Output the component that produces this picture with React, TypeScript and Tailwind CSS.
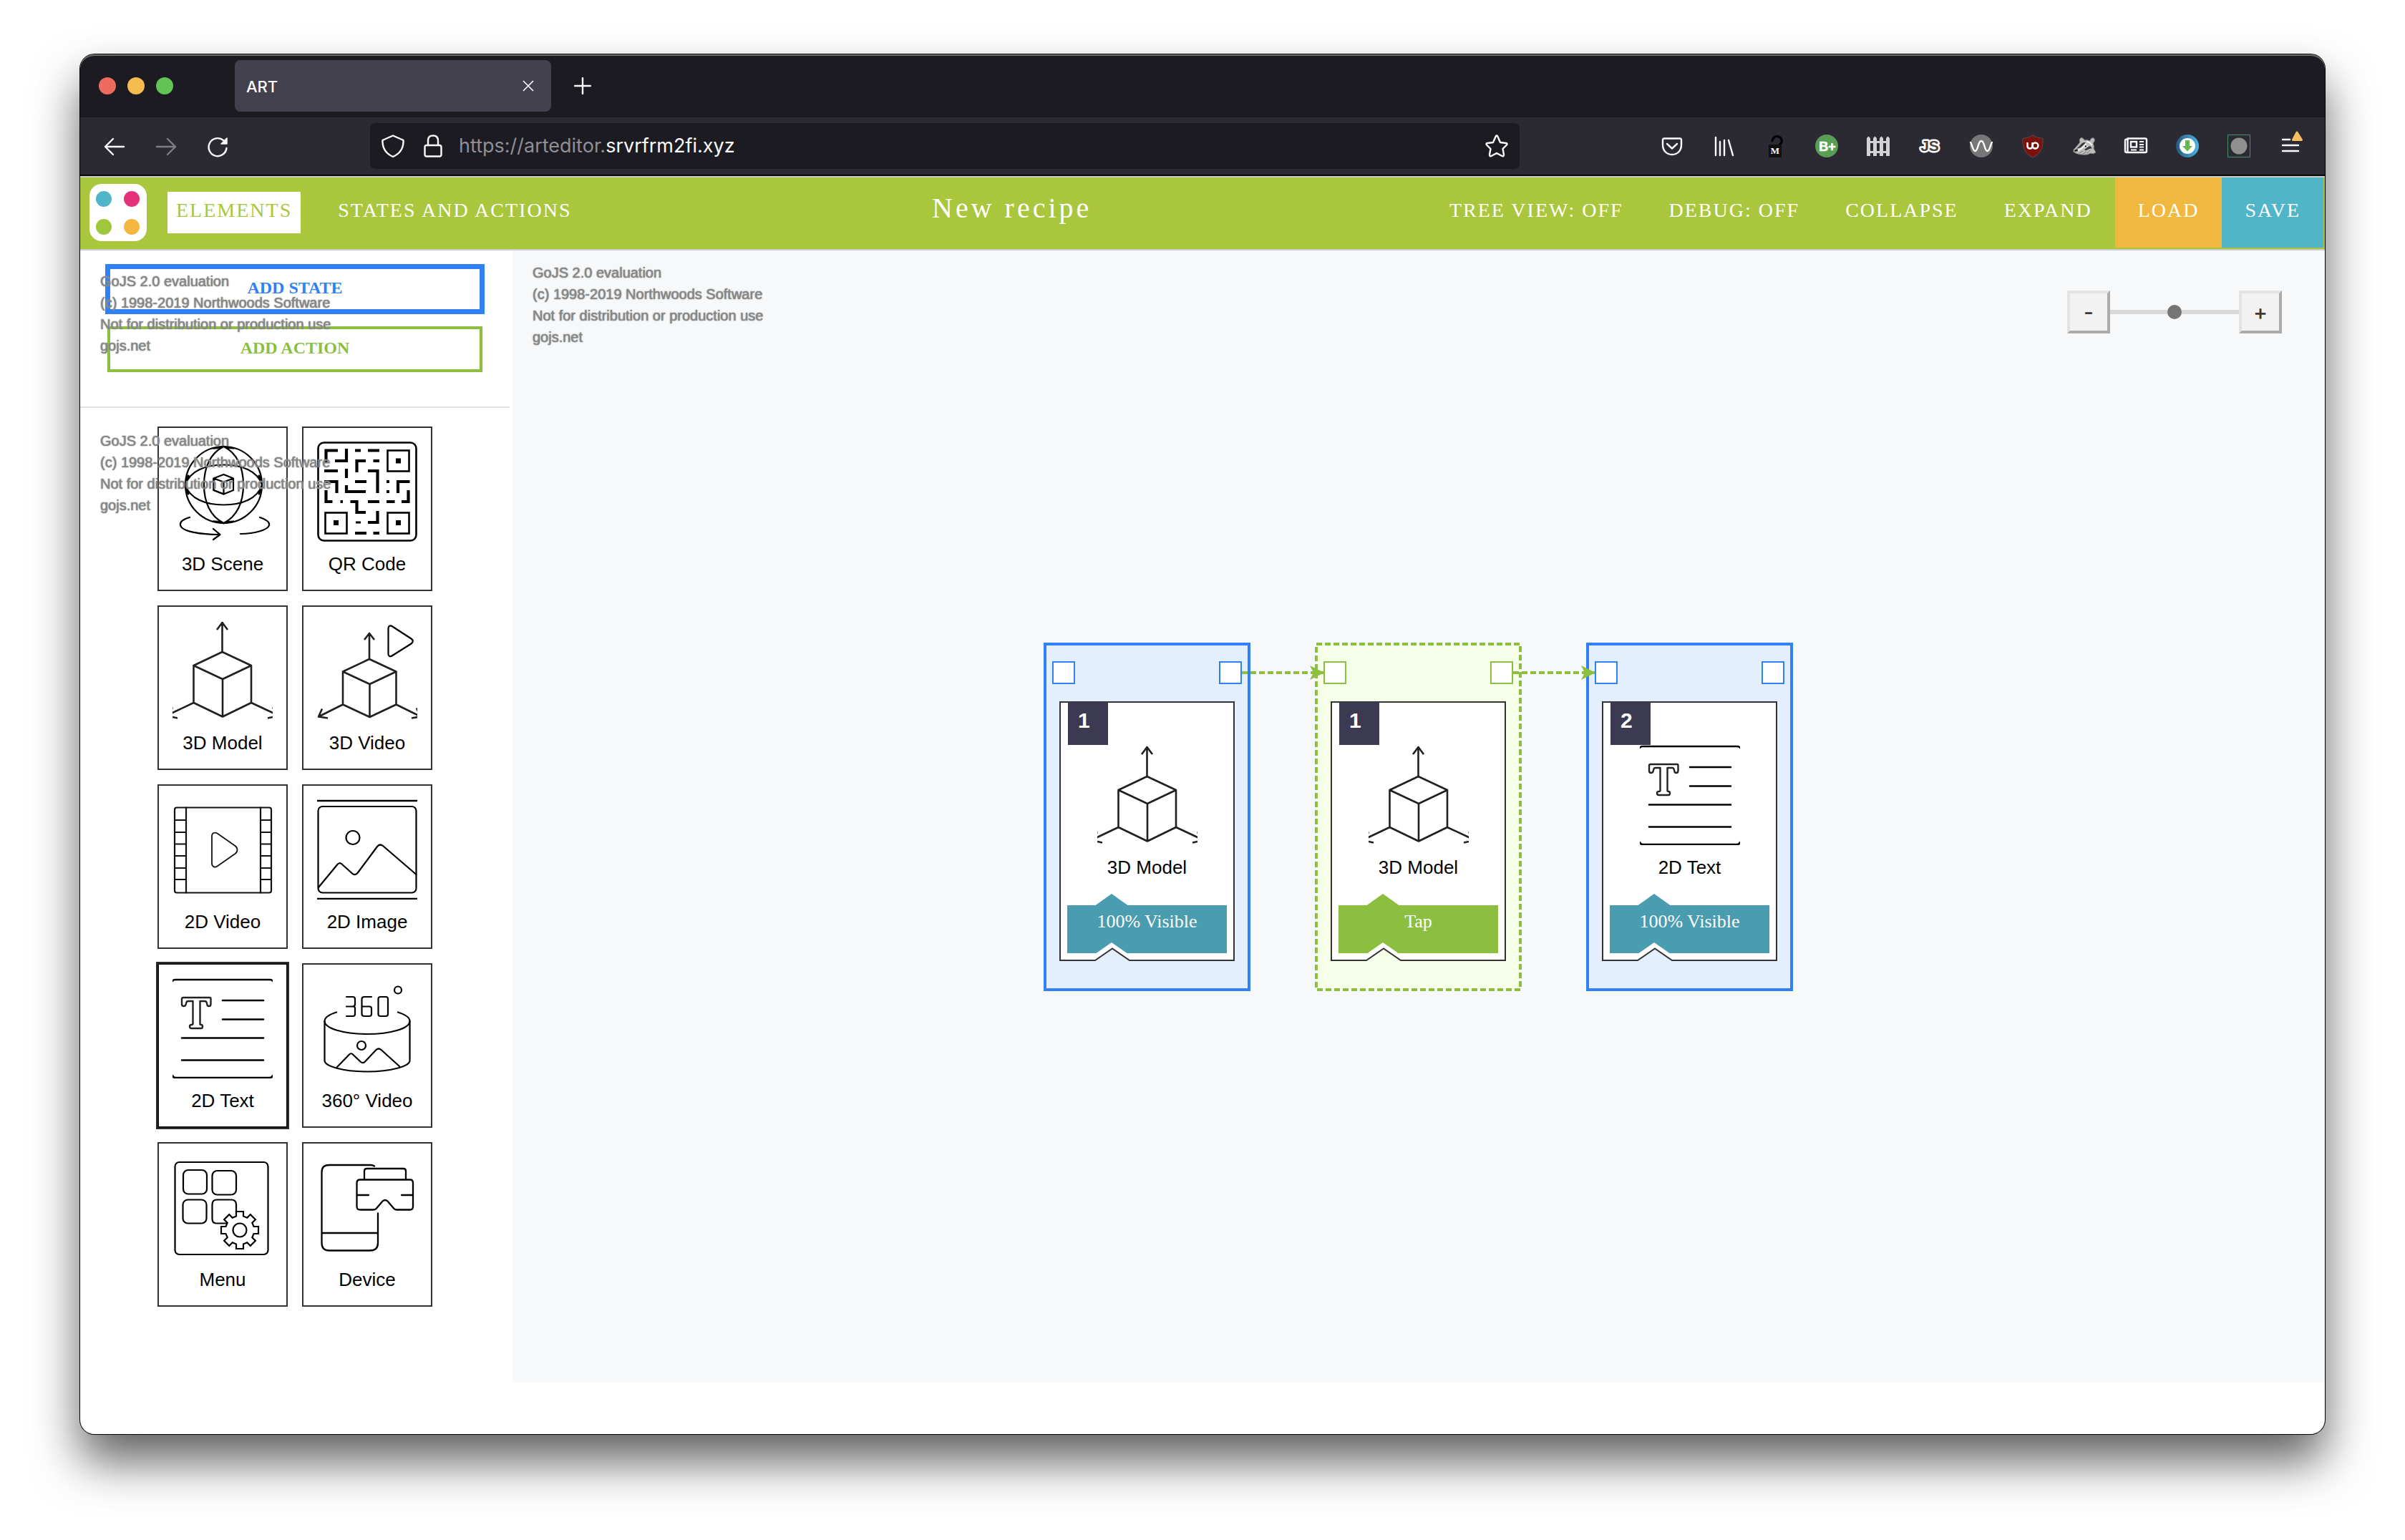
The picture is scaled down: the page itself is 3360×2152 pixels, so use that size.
import React from "react";

type DrawingProps = { children: React.ReactNode; color?: string };

function Drawing({ children, color = "#000" }: DrawingProps) {
  return (
    <svg
      viewBox="0 0 140 140"
      className="block size-35 shrink-0"
      fill="none"
      stroke={color}
      strokeWidth="2.6"
      strokeLinecap="round"
      strokeLinejoin="round"
      aria-hidden="true"
    >
      {children}
    </svg>
  );
}

function Scene3D() {
  return (
    <Drawing>
      <g strokeWidth="2.2">
        <circle cx="71.500" cy="60.500" r="53.500" />
        <path d="M71.500 7C90 16 99 36 99 60.500S90 105 71.500 114C53 105 44 85 44 60.500S53 16 71.500 7Z" />
        <path d="M18 60.500C24 41 46 32.500 71.500 32.500S119 41 125 60.500C119 80 97 88.500 71.500 88.500S24 80 18 60.500Z" />
        <path d="M57.500 51.500 71.500 46 85 51.500 71.500 56.500ZV68L71.500 73.500 85 68V51.500M71.500 56.500V73.500" />
        <path d="M57.500 51.500V68L71.500 73.500" />
        <path d="M24 106C14 109 10 113 11 117C13 126 40 130 66 130M57 122 66.500 130 57 137" />
        <path d="M122 106C131 109 136 113 135 117C133 124 114 128.500 95 129" />
      </g>
      <path
        d="M57 10 71.500 6 86 10 76 9.500 71.500 7 67 9.500ZM57 111 71.500 115 86 111 76 111.500 71.500 114 67 111.500Z"
        fill="#000"
        strokeWidth="1"
      />
      <path d="M22 48 19 56M121 48 124 56M22 73 19 65M121 73 124 65" strokeWidth="3" />
    </Drawing>
  );
}

function QrCode() {
  return (
    <Drawing>
      <rect x="1.500" y="1.500" width="137" height="137" rx="8" />
      <g strokeWidth="2.600" strokeLinejoin="miter">
        <rect x="98.500" y="12.500" width="30" height="29" />
        <rect x="11.500" y="99.500" width="30" height="29" />
        <rect x="98.500" y="99.500" width="30" height="29" />
      </g>
      <g fill="#000" stroke="none">
        <rect x="110" y="23.500" width="7" height="7" />
        <rect x="23" y="110" width="7" height="7" />
        <rect x="110" y="110" width="7" height="7" />
      </g>
      <path
        strokeLinecap="butt"
        strokeLinejoin="miter"
        strokeWidth="4.2"
        d="M29 12.500H12.500V30M41 10V27H25M53 12.500H61M71 12.500H87M68 27H55.500V43M78.500 27H87M10 41H29M41 38V51M71 41H84.500V72M10 56H27.500V72M53 56H69M97 56H101M97 70H101M129.500 56H113V72M41 61V70H68M12.500 68V84H21.500M46.500 84H55.500V99H68M71 84H87M97 84H108.500M118 84H127.500V68M84.500 97V113H71M53 128H69M78.500 128H87M32.500 84H36"
      />
      <path d="M54 113H61" strokeWidth="3" strokeLinecap="butt" />
    </Drawing>
  );
}

function Model3D() {
  return (
    <Drawing color="#231f20">
      <g strokeLinecap="butt">
        <path d="M69.500 2V44M62 13 69.500 3 77 13M69.500 44 29.500 63 70 82 110 63ZM29.500 63V115L70 134.500 110 115V63M70 82V134.500M29.500 115-1 129.500M110 115 141 129.500" />
        <path d="M0 135 7 136.500M133 136.500 140 135" />
        <path d="M0 121V124M140 121V124" strokeWidth="1" />
      </g>
    </Drawing>
  );
}

function Video3D() {
  return (
    <Drawing color="#231f20">
      <g strokeLinecap="butt">
        <path d="M73 18V54M66 27 73 18 80 27M73 54 36 71.500 73.500 89 110.500 71.500ZM36 71.500V117.500L73.500 135 110.500 117.500V71.500M73.500 89V135M36 117.500 2 134.500M110.500 117.500 141 132.500M7 123.500 2 134.500 15 136.500M132 136.500 141 135M139 122.500 141 127" />
      </g>
      <path
        stroke="#000"
        strokeWidth="2.2"
        d="M99.500 11C99.500 8 102 6.500 104.500 8L131.500 25.500C134.500 27.500 134.500 30.500 131.500 32.500L104.500 49.500C102 51 99.500 50 99.500 47Z"
      />
    </Drawing>
  );
}

function Video2D() {
  return (
    <Drawing color="#111">
      <g strokeWidth="2.2">
        <rect x="3" y="11.500" width="135" height="119" rx="3" />
        <path d="M19 11.500V130.500M123 11.500V130.500" />
        <path d="M3 29H19M3 46H19M3 62.500H19M3 79H19M3 96H19M3 112H19M123 29H138M123 46H138M123 62.500H138M123 79H138M123 96H138M123 112H138" />
        <path
          strokeWidth="1.800"
          d="M55 51.500C55 47 59 45.500 62.500 47.500L87.500 65C91.500 68 91.500 73 87.500 76L62.500 93.500C59 96 55 94 55 89.500Z"
        />
      </g>
    </Drawing>
  );
}

function Image2D() {
  return (
    <Drawing>
      <path d="M0 2H140M0 139H140" strokeLinecap="butt" />
      <rect x="1.500" y="10" width="137" height="120.500" rx="6" strokeWidth="2.2" />
      <circle cx="50" cy="53.500" r="9.500" strokeWidth="2.2" />
      <path
        strokeWidth="2.2"
        d="M2 123 28 91.500Q31 87.500 34.500 90.500L49 103.500Q53 107 56.500 103L84 66Q87.500 61.500 92 65L138.500 105"
      />
    </Drawing>
  );
}

function Text2D() {
  return (
    <Drawing>
      <path d="M0 4Q1 2 4 2H136Q139 2 140 4M0 136Q1 139 4 139H136Q139 139 140 136" />
      <path d="M70 31H127M70 57.500H127M13 83.500H127M13 114.500H127" />
      <path
        stroke="#222"
        strokeWidth="2.4"
        d="M15 27H52Q53.500 27 53.500 29V36Q53.500 39 51 39Q48.500 39 48.500 37L47.500 33.500Q47 32 45 32H38.500V63.500Q38.500 65 40 65Q42 65 42 67.500Q42 70 40 70H26.500Q24 70 24 67.500Q24 65 26.500 65Q28.500 65 28.500 63.500V32H22Q20 32 19.500 33.500L18.500 37Q18 39 15.500 39Q13 39 13 36V29Q13 27 15 27Z"
      />
    </Drawing>
  );
}

function Video360() {
  return (
    <Drawing>
      <g strokeWidth="2.2">
        <path d="M41 26H50Q53 26 53 29V36Q53 39.500 50 39.500H41M50 39.500Q53 39.500 53 42V50Q53 53 50 53H41" />
        <path d="M76 26H66Q62.500 26 62.500 29V50Q62.500 53 66 53H73Q76 53 76 50V42.500Q76 39.500 73 39.500H63" />
        <rect x="85.500" y="26" width="13.500" height="27" rx="3" />
        <circle cx="113" cy="16.500" r="5" />
        <path d="M27 47.500C16 51 10.500 55 10.500 60C10.500 70 37 78 70 78S129.500 70 129.500 60C129.500 55 124 51 113 47.500" />
        <path d="M10.500 60V115C10.500 123 37 130.500 70 130.500S129.500 123 129.500 115V60" />
        <circle cx="62" cy="94" r="6" />
        <path d="M28 124 44.500 107Q47.500 103.500 50.500 107L61 117Q64 119.500 67 116.500L82.500 100Q86 97 89.500 100L115 123" />
      </g>
    </Drawing>
  );
}

const gearOutline = Array.from({ length: 8 }, (_, tooth) => {
  const angle = (tooth * Math.PI) / 4;
  return [
    [-5, -19.5],
    [-5, -26],
    [5, -26],
    [5, -19.5],
  ]
    .map(([x, y]) => {
      const px = 94 + x * Math.cos(angle) - y * Math.sin(angle);
      const py = 102 + x * Math.sin(angle) + y * Math.cos(angle);
      return `${px.toFixed(1)},${py.toFixed(1)}`;
    })
    .join(" ");
}).join(" ");

function MenuDrawing() {
  return (
    <Drawing>
      <g strokeWidth="2.2">
        <rect x="3.500" y="7" width="130" height="129" rx="6" />
        <rect x="15" y="18" width="33" height="33.500" rx="7" />
        <rect x="55.500" y="19" width="33.500" height="33.500" rx="7" />
        <rect x="14.500" y="59.500" width="33" height="33" rx="7" />
        <path d="M76 92.500H61Q55.500 92.500 55.500 86V66.500Q55.500 59.500 62 59.500H82Q89 59.500 89 66.500V80" />
        <polygon points={gearOutline} fill="#fff" strokeLinejoin="miter" />
        <circle cx="94" cy="102" r="9.500" />
      </g>
    </Drawing>
  );
}

function DeviceDrawing() {
  return (
    <Drawing>
      <g strokeWidth="2.300">
        <path d="M80 12.500Q78 11 75 11H17Q6.500 11 6.500 21V120Q6.500 130.500 17 130.500H74Q85 130.500 85 120V78.500M7 106H84" />
        <path d="M66 31V19.500Q66 16 69.500 16H120.500Q124 16 124 19.500V31" />
        <path d="M60 31.500H130Q134 31.500 134 36V69Q134 73.500 130 73.500H111Q108.500 73.500 107 71.500L98.500 61.500Q95 58.500 91.500 61.500L83 71.500Q81.500 73.500 79 73.500H60Q55.500 73.500 55.500 69V36Q55.500 31.500 60 31.500Z" />
        <path d="M56 53H72M118 53H134" />
      </g>
    </Drawing>
  );
}

const palette = [
  { label: "3D Scene", icon: <Scene3D /> },
  { label: "QR Code", icon: <QrCode /> },
  { label: "3D Model", icon: <Model3D /> },
  { label: "3D Video", icon: <Video3D /> },
  { label: "2D Video", icon: <Video2D /> },
  { label: "2D Image", icon: <Image2D /> },
  { label: "2D Text", icon: <Text2D />, selected: true },
  { label: "360° Video", icon: <Video360 /> },
  { label: "Menu", icon: <MenuDrawing /> },
  { label: "Device", icon: <DeviceDrawing /> },
];

function Watermark() {
  return (
    <p className="pointer-events-none whitespace-nowrap font-['Liberation_Sans',sans-serif] text-[20px] leading-[30px] text-[#868686] [text-shadow:0_0_1px_#868686,0_0_2px_#9a9a9a]">
      GoJS 2.0 evaluation
      <br />
      (c) 1998-2019 Northwoods Software
      <br />
      Not for distribution or production use
      <br />
      gojs.net
    </p>
  );
}

function ToolIcon({ children }: { children: React.ReactNode }) {
  return (
    <svg viewBox="0 0 32 32" className="block size-8 overflow-visible" fill="none" stroke="#fbfbfe" strokeWidth="2.4" strokeLinecap="round" strokeLinejoin="round" aria-hidden="true">
      {children}
    </svg>
  );
}

const extensions: { name: string; icon: React.ReactNode }[] = [
  {
    name: "Save to Pocket",
    icon: (
      <>
        <path d="M5 5.500H27Q29 5.500 29 8V14.500C29 22.500 23.500 28 16 28S3 22.500 3 14.500V8Q3 5.500 5 5.500Z" />
        <path d="M9 13 16 19.500 23 13" />
      </>
    ),
  },
  { name: "Library", icon: <path d="M5 4V29M11 10V29M17 8V29M23 8 29 29" /> },
  {
    name: "Mailvelope",
    icon: (
      <>
        <path d="M12 9C13 3.500 17 1.500 21 3C26 5 27 11 22 14" stroke="#000" strokeWidth="3" />
        <rect x="7" y="14" width="18" height="18" fill="#111" stroke="none" />
        <text x="16" y="27" textAnchor="middle" className="font-['Liberation_Serif',serif] text-[13px] font-bold" fill="#fff" stroke="none">M</text>
      </>
    ),
  },
  {
    name: "B+",
    icon: (
      <>
        <circle cx="16" cy="16" r="16" fill="#589f53" stroke="none" />
        <text x="17" y="23" textAnchor="middle" className="font-['Liberation_Sans',sans-serif] text-[18px] font-bold" fill="#fff" stroke="#fff" strokeWidth=".6">B+</text>
      </>
    ),
  },
  {
    name: "Fence",
    icon: (
      <path
        d="M0 5 2.500 2.500 5 5V30H0ZM9 5 11.500 2.500 14 5V30H9ZM18 5 20.500 2.500 23 5V30H18ZM27 5 29.500 2.500 32 5V30H27ZM0 9H32V12H0ZM0 23H32V26H0Z"
        fill="#d2d2d6"
        stroke="none"
      />
    ),
  },
  {
    name: "JavaScript",
    icon: (
      <text x="16" y="23" textAnchor="middle" className="font-['Liberation_Sans',sans-serif] text-[21px] font-bold [paint-order:stroke]" fill="#444" stroke="#fff" strokeWidth="5">JS</text>
    ),
  },
  {
    name: "Wave",
    icon: (
      <>
        <circle cx="16" cy="16" r="16" fill="#777" stroke="none" />
        <path d="M1 11C3 13 4 23 7.500 23C12 23 11 9 16 9S20 23 24.500 23C28 23 29 13 31 11" stroke="#fff" />
      </>
    ),
  },
  {
    name: "uBlock Origin",
    icon: (
      <>
        <path d="M16 1C20 4 25 5 30 5.500C31 18 27 27 16 32C5 27 1 18 2 5.500C7 5 12 4 16 1Z" fill="#7c100a" stroke="#555" strokeWidth=".8" />
        <path d="M8.500 11V16Q8.500 19.500 12 19.500T15.500 16V11M15.500 15.500V19" stroke="#fff" strokeWidth="2.400" strokeLinecap="butt" />
        <circle cx="19.500" cy="15.500" r="4" stroke="#fff" strokeWidth="2.400" />
      </>
    ),
  },
  {
    name: "Privacy Badger",
    icon: (
      <g strokeWidth="1">
        <path d="M1 24Q0 21 4 18L10 11Q8 6 12 4.500Q15 5 16 8Q20 7 24 9Q25 4 29 5Q32 8 28 12Q30 16 29 20L32 25Q28 28 25 26Q20 29 14 28Q6 28 1 24Z" fill="#bdbdbd" stroke="#8a8a8a" />
        <path d="M5 20 13 12Q16 10.500 18 11.500L11 18ZM16 22Q18 18.500 24 16L27 19Q22 20 19 22Z" fill="#3a3a3a" stroke="none" />
        <path d="M8 22Q14 19 18 13M20 10Q24 11 26 14" stroke="#f4f4f4" strokeWidth="2" />
        <circle cx="18" cy="16.500" r="1.800" fill="#222" stroke="#eee" />
        <path d="M2 22 6 20 7 23 3 24Z" fill="#222" stroke="none" />
        <path d="M9 26 14 23M14 27 19 24M20 26 24 22" stroke="#777" />
      </g>
    ),
  },
  {
    name: "Reader",
    icon: (
      <>
        <path d="M4.500 5.500H29Q31 5.500 31 7.500V23Q31 25 29 25H3Q1 25 1 23V8Q1 6.500 4.500 6.500M4.500 5.500V25" />
        <rect x="9" y="10" width="8" height="7.500" strokeLinejoin="miter" />
        <path d="M21 10H27M21 14H27M21 17.500H27M9 21.500H17M21 21.500H27" strokeLinecap="butt" strokeWidth="2" />
      </>
    ),
  },
  {
    name: "Downloader",
    icon: (
      <>
        <defs>
          <linearGradient id="ring">
            <stop offset="0" stopColor="#245b7c" />
            <stop offset="1" stopColor="#4db4e6" />
          </linearGradient>
        </defs>
        <circle cx="16" cy="16" r="16" fill="url(#ring)" stroke="none" />
        <circle cx="16" cy="16" r="11" fill="#fff" stroke="none" />
        <path d="M13 8H19V16H23L16 23.500 9 16H13Z" fill="#6bb64a" stroke="none" />
      </>
    ),
  },
  {
    name: "Recorder",
    icon: (
      <>
        <rect x=".5" y=".5" width="31" height="31" stroke="#46916c" strokeWidth="1" strokeLinejoin="miter" />
        <circle cx="16" cy="16" r="11.500" fill="#8f8f8f" stroke="none" />
      </>
    ),
  },
  {
    name: "Application menu",
    icon: (
      <>
        <path d="M5 7H15M5 15H27M5 23H27" />
        <path d="M25 -3 31.500 7.500H19.500Z" fill="#f6be5f" stroke="#f6be5f" strokeWidth="3" />
      </>
    ),
  },
];

function BrowserChrome() {
  return (
    <div className="rounded-t-[20px] bg-[#1c1b22] shadow-[inset_0_3px_0_-1px_#6e706e]">
      <div className="flex h-22 items-center pl-[26px]">
        <div className="flex gap-4">
          <button aria-label="Close window" className="size-6 rounded-full bg-[#ec6a5e]" />
          <button aria-label="Minimize window" className="size-6 rounded-full bg-[#f5bd4f]" />
          <button aria-label="Zoom window" className="size-6 rounded-full bg-[#61c454]" />
        </div>
        <div className="ml-[86px] flex h-18 w-[442px] items-center justify-between rounded-lg bg-[#42414d] pr-6 pl-4">
          <span className="pt-0.5 font-[Inter,sans-serif] text-[22px] font-medium text-[#fbfbfe]">ART</span>
          <button aria-label="Close tab">
            <svg viewBox="0 0 16 16" className="size-4" stroke="#fbfbfe" strokeWidth="1.600" aria-hidden="true">
              <path d="M1 1 15 15M15 1 1 15" />
            </svg>
          </button>
        </div>
        <button aria-label="New tab" className="ml-8">
          <svg viewBox="0 0 24 24" className="size-6" stroke="#fbfbfe" strokeWidth="2.400" strokeLinecap="round" aria-hidden="true">
            <path d="M12 1V23M1 12H23" />
          </svg>
        </button>
      </div>
      <div className="flex h-[82px] items-center border-b-2 border-[#0c0c0d] bg-[#2b2a33] pr-8 pl-8">
        <div className="flex gap-10">
          <button aria-label="Back">
            <ToolIcon><path d="M29 17H3M14 6 3 17 14 28" /></ToolIcon>
          </button>
          <button aria-label="Forward" className="opacity-40">
            <ToolIcon><path d="M3 17H29M18 6 29 17 18 28" /></ToolIcon>
          </button>
          <button aria-label="Reload">
            <ToolIcon>
              <path d="M28.500 19A12.500 12.500 0 1 1 24 8" />
              <path d="M29 5V13H21Z" fill="#fbfbfe" strokeWidth="1.500" />
            </ToolIcon>
          </button>
        </div>
        <div className="mx-[197px] flex h-16 flex-1 items-center rounded-lg bg-[#1c1b22] px-4">
          <ToolIcon>
            <path d="M16 1.500 29.500 7.500Q31 8 30.500 11C30 20 25 27 16 31C7 27 2 20 1.500 11Q1 8 2.500 7.500Z" />
          </ToolIcon>
          <span className="ml-6">
            <ToolIcon>
              <path d="M9 15V8.500Q9 1.500 16 1.500T23 8.500V15" />
              <rect x="4.500" y="15" width="23" height="15.500" rx="2.500" />
            </ToolIcon>
          </span>
          <span className="ml-5 font-[Inter,sans-serif] text-[27px] text-[#8f8f98]">
            https://arteditor.<span className="text-[#fbfbfe]">srvrfrm2fi.xyz</span>
          </span>
          <button aria-label="Bookmark this page" className="ml-auto">
            <ToolIcon>
              <path d="M16 1.500Q17 1.500 17.500 3L21 11 29 12Q31.500 12.500 30 14.500L24.500 20 26 28Q26 31 23.500 30L16 26 8.500 30Q6 31 6 28L7.500 20 2 14.500Q.5 12.500 3 12L11 11 14.500 3Q15 1.500 16 1.500Z" />
            </ToolIcon>
          </button>
        </div>
        <div className="flex gap-10">
          {extensions.map((extension) => (
            <button key={extension.name} aria-label={extension.name}>
              <ToolIcon>{extension.icon}</ToolIcon>
            </button>
          ))}
        </div>
      </div>
    </div>
  );
}

function AppHeader() {
  return (
    <header className="flex h-[104px] items-stretch border-y-2 border-[#ccc] bg-[#a9c63d] pr-0.5 pb-0.5 font-['Liberation_Serif',serif] text-[28px] tracking-[2px] text-white">
      <a href="#home" aria-label="Home" className="ml-[13px] self-center">
        <svg viewBox="0 0 80 80" className="size-20" aria-hidden="true">
          <rect width="80" height="80" rx="17" fill="#fff" />
          <circle cx="20" cy="21" r="11" fill="#50b5c9" />
          <circle cx="59" cy="21" r="11" fill="#e5317a" />
          <circle cx="20" cy="60" r="11" fill="#a0c63c" />
          <circle cx="59" cy="60" r="11" fill="#f6b53f" />
        </svg>
      </a>
      <nav className="ml-[29px] flex items-center">
        <a href="#elements" className="flex h-[58px] items-center bg-white px-3 pb-1.5 text-[#a9c63d]">ELEMENTS</a>
        <a href="#states" className="ml-10 flex h-[58px] items-center px-3 pb-1.5">STATES AND ACTIONS</a>
      </nav>
      <h1 className="flex flex-1 items-center justify-center pb-3 pl-6 text-[40px] tracking-widest">New recipe</h1>
      <nav className="flex">
        <button className="px-8 pb-1.5">TREE VIEW: OFF</button>
        <button className="px-8 pb-1.5">DEBUG: OFF</button>
        <button className="px-8 pb-1.5">COLLAPSE</button>
        <button className="px-8 pb-1.5">EXPAND</button>
        <button className="bg-[#f1b83f] px-8 pb-1.5">LOAD</button>
        <button className="bg-[#50b5c9] px-8 pb-1.5">SAVE</button>
      </nav>
    </header>
  );
}

function Sidebar() {
  return (
    <aside className="w-[604px] shrink-0 pr-1">
      <section className="relative flex h-[220px] flex-col items-center gap-[17px] border-b-2 border-[#e2e2e2] pt-[19px] font-['Liberation_Serif',serif] text-[24px] font-bold">
        <button className="h-[70px] w-[530px] border-[7px] border-[#3080f6] pb-1 text-[#3080f6]">ADD STATE</button>
        <button className="h-16 w-[524px] border-4 border-[#8cbf3f] pb-1 text-[#8cbf3f]">ADD ACTION</button>
        <div className="pointer-events-none absolute top-7 left-7 font-normal"><Watermark /></div>
      </section>
      <section className="relative grid grid-cols-[182px_182px] justify-center gap-5 pt-[26px]">
        {palette.map((item) => (
          <button
            key={item.label}
            className={
              item.selected
                ? "flex h-[230px] flex-col items-center border-2 border-[#111] pt-[19px] outline-2 outline-[#2b2d33]"
                : "flex h-[230px] flex-col items-center border-2 border-[#333] pt-[19px]"
            }
          >
            {item.icon}
            <span className="mt-[15px] font-['Liberation_Sans',sans-serif] text-[26px] leading-8 text-black">{item.label}</span>
          </button>
        ))}
        <div className="pointer-events-none absolute top-[31px] left-7"><Watermark /></div>
      </section>
    </aside>
  );
}

type NodeProps = {
  place: string;
  kind: "state" | "action";
  step: number;
  icon: React.ReactNode;
  label: string;
  tag: string;
};

function DiagramNode({ place, kind, step, icon, label, tag }: NodeProps) {
  const line = kind === "state" ? "#3080f6" : "#8cbf3f";
  return (
    <article className={`${place} absolute top-[548px] h-[487px] w-[289px]`}>
      <svg viewBox="0 0 289 487" className="absolute inset-0 size-full" aria-hidden="true">
        <rect
          x="2"
          y="2"
          width="285"
          height="483"
          fill={kind === "state" ? "#e3effe" : "#f6ffe8"}
          stroke={line}
          strokeWidth="4"
          strokeDasharray={kind === "state" ? undefined : "8 4"}
        />
        <rect x="13" y="27" width="30" height="30" fill="#fff" stroke={line} strokeWidth="2" />
        <rect x="246" y="27" width="30" height="30" fill="#fff" stroke={line} strokeWidth="2" />
        <path d="M23 83H266V444H120L96 427.500 72 444H23Z" fill="#fff" stroke="#333" strokeWidth="2" />
        <path d="M33 367H72.500L95 351 117.500 367H256V434H116.500L95 419 73.500 434H33Z" fill={kind === "state" ? "#4a9db0" : "#8cbf3f"} />
      </svg>
      <div className="relative flex flex-col items-center pt-[83px]">
        <span className="-mb-[60px] ml-[34px] h-[60px] w-14 self-start bg-[#3c3a52] pt-2 pl-3.5 font-['Liberation_Sans',sans-serif] text-[30px] leading-9 font-bold text-white">
          {step}
        </span>
        <span className="mt-[60px]">{icon}</span>
        <span className="mt-[15px] font-['Liberation_Sans',sans-serif] text-[26px] leading-8 text-black">{label}</span>
        <span className="mt-11 font-['Liberation_Serif',serif] text-[26px] leading-8 text-white">{tag}</span>
      </div>
    </article>
  );
}

function Link({ place }: { place: string }) {
  return (
    <svg viewBox="0 0 115 20" className={`${place} absolute top-[580px] h-5 w-[115px]`} aria-hidden="true">
      <path d="M0 10H114" stroke="#8cbf3f" strokeWidth="4" strokeDasharray="8 4" />
      <path d="M95 0 115 10 95 20 100 10Z" fill="#8cbf3f" />
    </svg>
  );
}

function Canvas() {
  return (
    <main className="relative mb-18 flex-1 bg-[#f7f8fa]">
      <div className="absolute top-4 left-7"><Watermark /></div>
      <DiagramNode place="left-[742px]" kind="state" step={1} icon={<Model3D />} label="3D Model" tag="100% Visible" />
      <DiagramNode place="left-[1121px]" kind="action" step={1} icon={<Model3D />} label="3D Model" tag="Tap" />
      <DiagramNode place="left-[1500px]" kind="state" step={2} icon={<Text2D />} label="2D Text" tag="100% Visible" />
      <Link place="left-[1019px]" />
      <Link place="left-[1398px]" />
      <div className="flex items-center justify-end pt-14 pr-15">
        <button className="size-15 border-4 border-t-[#e3e3e3] border-r-[#ababab] border-b-[#ababab] border-l-[#e3e3e3] bg-[#f2f2f2] font-[Inter,sans-serif] text-[30px] font-medium text-[#3a3a3a]">-</button>
        <input
          type="range"
          aria-label="Zoom"
          defaultValue={50}
          className="h-1.5 w-[180px] appearance-none bg-[#d8d8d8] [&::-webkit-slider-thumb]:size-5 [&::-webkit-slider-thumb]:appearance-none [&::-webkit-slider-thumb]:rounded-full [&::-webkit-slider-thumb]:bg-[#757575]"
        />
        <button className="size-15 border-4 border-t-[#e3e3e3] border-r-[#ababab] border-b-[#ababab] border-l-[#e3e3e3] bg-[#f2f2f2] font-[Inter,sans-serif] text-[30px] font-medium text-[#3a3a3a]">+</button>
      </div>
    </main>
  );
}

export default function App() {
  return (
    <div className="flex min-h-screen flex-col overflow-hidden bg-white px-28 pt-19 pb-37">
      <div className="flex flex-1 flex-col rounded-[20px] bg-white shadow-[0_0_0_1px_#000,0_38px_66px_rgba(0,0,0,0.62)]">
        <BrowserChrome />
        <AppHeader />
        <div className="flex flex-1">
          <Sidebar />
          <Canvas />
        </div>
      </div>
    </div>
  );
}
